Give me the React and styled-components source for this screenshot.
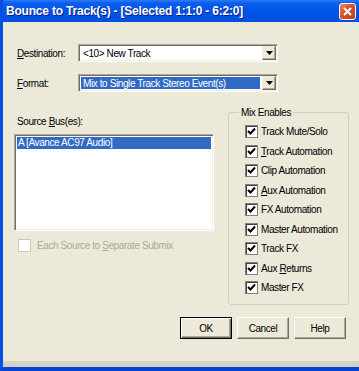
import React from 'react';
import styled, { createGlobalStyle } from 'styled-components';

const GlobalStyle = createGlobalStyle`
  html, body {
    margin: 0;
    padding: 0;
    background: #ece9d8;
  }
  body {
    font-family: "Liberation Sans", Arial, sans-serif;
    font-size: 10px;
    letter-spacing: -0.4px;
  }
`;

const mixOptions = [
  { id: 1, label: 'Track Mute/Solo' },
  { id: 2, label: 'Track Automation', key: 0 },
  { id: 3, label: 'Clip Automation' },
  { id: 4, label: 'Aux Automation', key: 0 },
  { id: 5, label: 'FX Automation' },
  { id: 6, label: 'Master Automation' },
  { id: 7, label: 'Track FX' },
  { id: 8, label: 'Aux Returns', key: 4 },
  { id: 9, label: 'Master FX' },
];

const withMnemonic = (text, index) => {
  if (index === undefined) return text;
  return (
    <>
      {text.slice(0, index)}
      <u>{text[index]}</u>
      {text.slice(index + 1)}
    </>
  );
};

const Arrow = () => (
  <svg width="7" height="4" viewBox="0 0 7 4">
    <polygon points="0,0 7,0 3.5,4" fill="#000" />
  </svg>
);

const Check = () => (
  <svg width="9" height="9" viewBox="0 0 9 9">
    <path d="M1 4 L3.5 6.5 L8 1.5" fill="none" stroke="#000" strokeWidth="2" />
  </svg>
);

const App = () => {
  return (
    <Window>
      <GlobalStyle />
      <TitleBar>
        <Title>Bounce to Track(s) - [Selected 1:1:0 - 6:2:0]</Title>
        <CloseButton>
          <svg width="9" height="9" viewBox="0 0 9 9">
            <path d="M1 1 L8 8 M8 1 L1 8" stroke="#fff" strokeWidth="2" />
          </svg>
        </CloseButton>
      </TitleBar>

      <Body>
        <FieldRow>
          <Label><u>D</u>estination:</Label>
          <Select>
            <SelectText>&lt;10&gt; New Track</SelectText>
            <DropButton><Arrow /></DropButton>
          </Select>
        </FieldRow>

        <FieldRow spaced>
          <Label><u>F</u>ormat:</Label>
          <Select>
            <SelectText selected>Mix to Single Track Stereo Event(s)</SelectText>
            <DropButton><Arrow /></DropButton>
          </Select>
        </FieldRow>

        <Lower>
          <SourceColumn>
            <SourceLabel>Source <u>B</u>us(es):</SourceLabel>
            <ListBox>
              <ListItem selected>A [Avance AC97 Audio]</ListItem>
            </ListBox>
            <CheckRow disabled>
              <CheckBox disabled />
              <span>Each Source to <u>S</u>eparate Submix</span>
            </CheckRow>
          </SourceColumn>

          <GroupBox>
            <Legend>Mix Enables</Legend>
            {mixOptions.map(opt => (
              <CheckRow key={opt.id} tall>
                <CheckBox><Check /></CheckBox>
                <span>{withMnemonic(opt.label, opt.key)}</span>
              </CheckRow>
            ))}
          </GroupBox>
        </Lower>

        <ButtonRow>
          <Button primary>OK</Button>
          <Button>Cancel</Button>
          <Button>Help</Button>
        </ButtonRow>
      </Body>

      <StatusStrip>
        <Dots>. . .</Dots>
        <Dots>. .</Dots>
      </StatusStrip>
    </Window>
  );
};

const Window = styled.div`
  width: 359px;
  height: 371px;
  display: flex;
  flex-direction: column;
  background: #ece9d8;
  border-left: 3px solid #0a4ee4;
  border-bottom: 4px solid #0843d8;
  box-sizing: border-box;
  overflow: hidden;
`;

const TitleBar = styled.div`
  height: 22px;
  margin-left: -3px;
  display: flex;
  align-items: center;
  justify-content: space-between;
  padding: 0 3px 0 6px;
  background: linear-gradient(#2f7cf5 0, #0a5ef0 3px, #0055e5 50%, #0050df 100%);
  flex-shrink: 0;
`;

const Title = styled.div`
  color: #fff;
  font-family: "Liberation Sans", Arial, sans-serif;
  font-weight: bold;
  font-size: 12px;
  letter-spacing: -0.2px;
  text-shadow: 1px 1px #0a1e8c;
  white-space: nowrap;
`;

const CloseButton = styled.div`
  width: 15px;
  height: 15px;
  border: 1px solid #fff;
  border-radius: 3px;
  background: linear-gradient(135deg, #e8896a 0%, #d9512c 45%, #c23a18 100%);
  display: flex;
  align-items: center;
  justify-content: center;
`;

const Body = styled.div`
  flex: 1;
  display: flex;
  flex-direction: column;
  padding: 22px 10px 0 11px;
  color: #000;
`;

const FieldRow = styled.div`
  display: flex;
  align-items: center;
  height: 18px;
  margin-top: ${({ spaced }) => (spaced ? '12px' : '0')};
`;

const Label = styled.div`
  width: 64px;
  padding-left: 3px;
  box-sizing: border-box;
`;

const Select = styled.div`
  width: 200px;
  height: 18px;
  box-sizing: border-box;
  display: flex;
  align-items: stretch;
  background: #fff;
  border: 1px solid;
  border-color: #aca899 #fff #fff #aca899;
  box-shadow: inset 1px 1px #716f64, inset -1px -1px #f1efe2;
  padding: 1px;
`;

const SelectText = styled.div`
  flex: 1;
  display: flex;
  align-items: center;
  margin: 1px 2px 1px 1px;
  padding-left: 2px;
  white-space: nowrap;
  overflow: hidden;
  background: ${({ selected }) => (selected ? '#316ac5' : 'transparent')};
  color: ${({ selected }) => (selected ? '#fff' : '#000')};
`;

const DropButton = styled.div`
  width: 14px;
  display: flex;
  align-items: center;
  justify-content: center;
  background: #ece9d8;
  box-sizing: border-box;
  border: 1px solid;
  border-color: #f1efe2 #716f64 #716f64 #f1efe2;
  box-shadow: inset -1px -1px #aca899;
`;

const Lower = styled.div`
  display: flex;
  align-items: flex-start;
  margin-top: 14px;
  gap: 14px;
`;

const SourceColumn = styled.div`
  width: 200px;
  flex-shrink: 0;
  display: flex;
  flex-direction: column;
`;

const SourceLabel = styled.div`
  padding-left: 3px;
  margin-top: 9px;
  line-height: 13px;
`;

const ListBox = styled.div`
  margin-top: 6px;
  height: 97px;
  box-sizing: border-box;
  background: #fff;
  border: 1px solid;
  border-color: #aca899 #fff #fff #aca899;
  box-shadow: inset 1px 1px #716f64, inset -1px -1px #f1efe2;
  padding: 2px;
`;

const ListItem = styled.div`
  height: 12px;
  line-height: 12px;
  padding-left: 1px;
  background: ${({ selected }) => (selected ? '#316ac5' : 'transparent')};
  color: ${({ selected }) => (selected ? '#fff' : '#000')};
  white-space: nowrap;
`;

const CheckRow = styled.div`
  display: flex;
  align-items: center;
  gap: ${({ tall }) => (tall ? '3px' : '6px')};
  height: ${({ tall }) => (tall ? '19.5px' : '13px')};
  margin-top: ${({ tall }) => (tall ? '0' : '8px')};
  padding-left: ${({ tall }) => (tall ? '0' : '4px')};
  color: ${({ disabled }) => (disabled ? '#aca899' : '#000')};
  white-space: nowrap;
`;

const CheckBox = styled.div`
  width: 13px;
  height: 13px;
  box-sizing: border-box;
  flex-shrink: 0;
  display: flex;
  align-items: center;
  justify-content: center;
  background: #fff;
  border: 1px solid ${({ disabled }) => (disabled ? '#cac8bb' : '#808080')};
  box-shadow: ${({ disabled }) => (disabled ? 'none' : 'inset 1px 1px #404040')};
`;

const GroupBox = styled.fieldset`
  width: 121px;
  min-width: 0;
  height: 199px;
  box-sizing: border-box;
  margin: 0;
  padding: 3px 0 0 16px;
  border: 1px solid #d0d0bf;
  border-radius: 3px;
  flex-shrink: 0;
`;

const Legend = styled.legend`
  padding: 0 2px;
  margin-left: -6px;
  line-height: 13px;
`;

const ButtonRow = styled.div`
  display: flex;
  justify-content: flex-end;
  gap: 5px;
  margin-top: 12px;
  padding-right: 3px;
`;

const Button = styled.div`
  width: 52px;
  height: 22px;
  box-sizing: border-box;
  display: flex;
  align-items: center;
  justify-content: center;
  background: #ece9d8;
  border: 1px solid;
  border-color: ${({ primary }) => (primary ? '#000' : '#fff #716f64 #716f64 #fff')};
  box-shadow: ${({ primary }) =>
    primary
      ? 'inset 1px 1px #fff, inset -1px -1px #716f64, inset -2px -2px #aca899'
      : 'inset -1px -1px #aca899'};
`;

const StatusStrip = styled.div`
  height: 6px;
  display: flex;
  justify-content: space-between;
  align-items: flex-end;
  padding: 0 4px;
  background: #d6d3c4;
  flex-shrink: 0;
`;

const Dots = styled.span`
  font-size: 6px;
  line-height: 6px;
  color: #aca899;
`;

export default App;
